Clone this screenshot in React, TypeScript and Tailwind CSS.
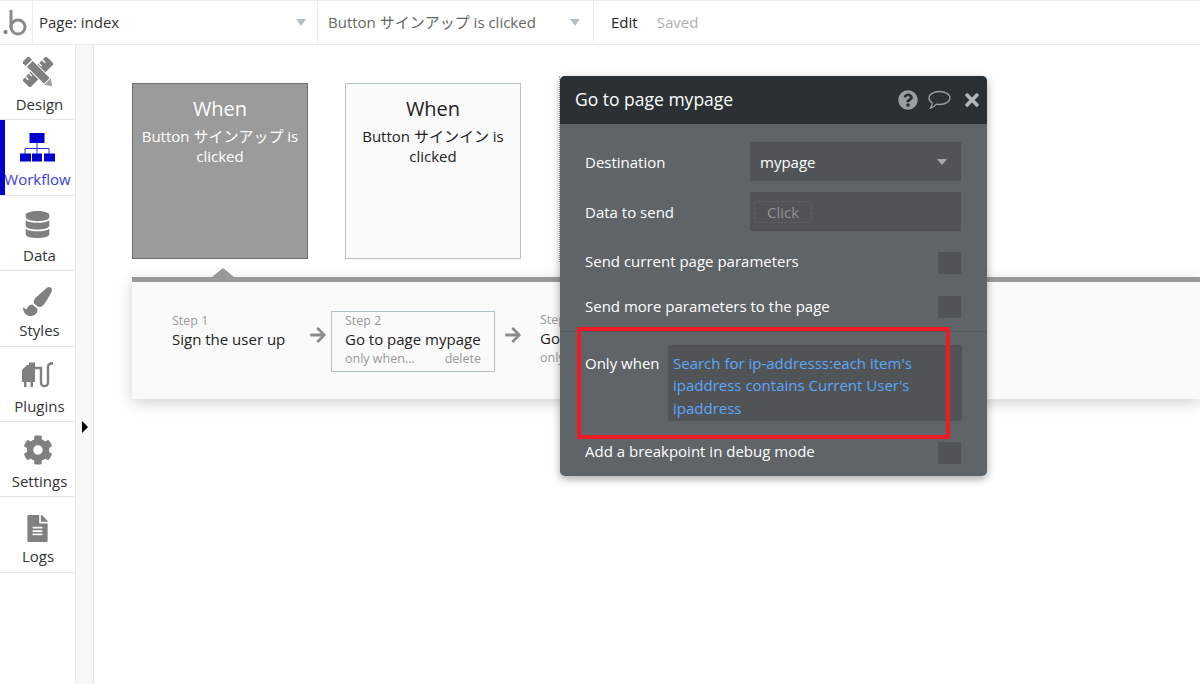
import { FaDatabase, FaPaintBrush, FaCog, FaFileAlt, FaQuestionCircle, FaTimes, FaArrowRight } from "react-icons/fa";
import type { ReactNode } from "react";

const FONT = "font-['Open_Sans','Noto_Sans_CJK_JP',sans-serif]";

function DesignIcon() {
  return (
    <svg width="30" height="30" viewBox="0 0 30 30" fill="#808080" className="mb-[3px]">
      <g transform="rotate(-45 15 15)">
        <rect x="-2" y="9.5" width="34" height="11" />
        <rect x="2" y="9.5" width="1.4" height="4" fill="#fff" />
        <rect x="7" y="9.5" width="1.4" height="4" fill="#fff" />
        <rect x="21" y="9.5" width="1.4" height="4" fill="#fff" />
        <rect x="26" y="9.5" width="1.4" height="4" fill="#fff" />
      </g>
      <g transform="rotate(45 15 15)">
        <rect x="-3" y="10.5" width="5" height="9" />
        <rect x="3" y="10.5" width="25" height="9" stroke="#fff" strokeWidth="1" />
        <path d="M28.5 10.5 L35 15 L28.5 19.5 Z" fill="#a0a0a0" />
      </g>
    </svg>
  );
}

function WorkflowIcon() {
  return (
    <svg width="36" height="29" viewBox="0 0 36 29" className="mb-[3px]" fill="#0000cc">
      <rect x="9.5" y="0" width="15" height="10" />
      <path d="M17 10 V15 M5 21 V15.5 H29 V21 M17 15 V21" fill="none" stroke="#3030d8" strokeWidth="1" />
      <rect x="0" y="20.5" width="11" height="8" />
      <rect x="12" y="20.5" width="10" height="8" />
      <rect x="24" y="20.5" width="11" height="8" />
    </svg>
  );
}

function PluginsIcon() {
  return (
    <svg width="32" height="26" viewBox="0 0 32 26" fill="none" className="mb-[4px]">
      <path d="M0 8 L5 3 H7 V0.5 H13 V20 H11 V25 H8.5 V20 H4.5 V25 H2 V20 H0 Z" fill="#808080" />
      <path d="M13 6 H19 V20 C19 25.5 26 25.5 26 20 V5 C26 2.5 28 1.2 31 1.2" stroke="#808080" strokeWidth="2.4" />
    </svg>
  );
}

function CommentIcon() {
  return (
    <svg width="23" height="20" viewBox="0 0 23 20" fill="none" stroke="#9a9ea1" strokeWidth="1.3">
      <path d="M11.5 1.5 C17.3 1.5 22 4.4 22 8 C22 11.6 17.3 14.5 11.5 14.5 C10.3 14.5 9.4 14.4 8.4 14.2 C7 16.2 4.8 17.6 2.4 18.2 C3.6 16.6 4.2 15 4.2 13 C2.2 11.8 1 10 1 8 C1 4.4 5.7 1.5 11.5 1.5 Z" />
    </svg>
  );
}

function NavItem({ icon, label, active, labelClass = "" }: { icon: ReactNode; label: string; active?: boolean; labelClass?: string }) {
  return (
    <div className="relative flex h-[75.4px] flex-col items-center border-b border-[#e4e4e4] pl-[4px]">
      {active && <span className="absolute bottom-0 left-0 top-0 w-[5px] bg-[#0000cc]" />}
      <div className="flex h-[45px] items-end justify-center pr-[4px]">{icon}</div>
      <span className={`mt-[4px] text-[15px] leading-[20px] ${active ? "ml-[-4px] text-[#3a3ae0]" : "text-[#333]"} ${labelClass}`}>{label}</span>
    </div>
  );
}

function Row({ label, children, className = "", labelClass = "" }: { label: string; children?: ReactNode; className?: string; labelClass?: string }) {
  return (
    <div className={`flex items-center justify-between pl-[25px] pr-[26px] ${className}`}>
      <span className={`text-[15px] leading-[20px] text-white ${labelClass}`}>{label}</span>
      {children}
    </div>
  );
}

function Check() {
  return <div className="h-[22px] w-[23px] bg-[#505457]" />;
}

function Popup() {
  return (
    <div className="absolute left-[560px] top-[76px] h-[400px] w-[427px] overflow-hidden rounded-[5px] bg-[#5f6468] shadow-[0_3px_8px_rgba(0,0,0,0.35)]">
      <div className="flex h-[48px] items-center justify-between bg-[#2a3033] pl-[15px] pr-[5px]">
        <span className="pb-[2px] text-[17.5px] text-white">Go to page mypage</span>
        <div className="flex items-center gap-[11px] text-[#9a9ea1]">
          <FaQuestionCircle size={20} className="mr-[-1px]" />
          <CommentIcon />
          <FaTimes size={20} className="text-[#b4b7b9]" />
        </div>
      </div>

      <Row label="Destination" className="mt-[18px] h-[39px]">
        <div className="flex h-[39px] w-[211px] items-center justify-between bg-[#505457] pl-[10px] pr-[14px] text-[15px] text-white">
          <span className="pt-[2px]">mypage</span>
          <span className="h-0 w-0 border-x-[5px] border-t-[6px] border-x-transparent border-t-[#a8abad]" />
        </div>
      </Row>
      <Row label="Data to send" className="mt-[11px] h-[39px]">
        <div className="flex h-[39px] w-[211px] items-center bg-[#505457] pl-[4px]">
          <span className="rounded-[3px] border border-dashed border-[#5d6164] px-[12px] text-[15px] leading-[20px] text-[#8f9295]">Click</span>
        </div>
      </Row>
      <Row label="Send current page parameters" labelClass="mb-[4px]" className="mt-[21px] h-[22px]">
        <Check />
      </Row>
      <Row label="Send more parameters to the page" labelClass="mb-[2px]" className="mt-[22px] h-[22px]">
        <Check />
      </Row>
      <div className="mt-[13px] border-t border-[#54585b]" />
      <div className="mt-[13px] flex items-start pl-[25px] pr-[25px]">
        <span className="w-[83px] pt-[8px] text-[15px] leading-[20px] text-white">Only when</span>
        <div className="h-[76px] flex-1 rounded-[2px] bg-[#505457] px-[5px] pt-[7px] text-[15px] leading-[22.3px] text-[#5ea6f7]">
          Search for ip-addresss:each item's ipaddress contains Current User's ipaddress
        </div>
      </div>
      <Row label="Add a breakpoint in debug mode" labelClass="mb-[4px]" className="mt-[21px] h-[22px]">
        <Check />
      </Row>
    </div>
  );
}

function Step({ n, title, className = "" }: { n: number; title: string; className?: string }) {
  return (
    <div className={`shrink-0 ${className}`}>
      <div className="text-[12.5px] leading-[15px] text-[#999]">Step {n}</div>
      <div className="text-[15px] leading-[22px] text-[#222]">{title}</div>
    </div>
  );
}

export default function App() {
  return (
    <div className={`${FONT} relative flex h-[684px] w-[1200px] flex-col overflow-hidden bg-white`}>
      {/* top bar */}
      <div className="flex h-[45px] shrink-0 items-stretch border-y border-[#e8ebeb] bg-white text-[15px]">
        <div className="flex w-[33px] items-center border-r border-[#e8eded]">
          <svg width="30" height="34" viewBox="0 0 30 34" fill="none" className="mt-[-1px]">
            <circle cx="5.5" cy="27" r="2.2" fill="#8a8a8a" />
            <path d="M11 5 V23" stroke="#8a8a8a" strokeWidth="3" />
            <circle cx="18" cy="22" r="7" stroke="#8a8a8a" strokeWidth="3" />
          </svg>
        </div>
        <div className="flex w-[285px] items-center justify-between border-r border-[#e8eded] pl-[6px] pr-[11px] text-[#333]">
          Page: index
          <span className="h-0 w-0 border-x-[5.5px] border-t-[7px] border-x-transparent border-t-[#b4c0c6]" />
        </div>
        <div className="flex w-[276px] items-center justify-between border-r border-[#e8eded] pl-[10px] pr-[13px] text-[#666]">
          Button サインアップ is clicked
          <span className="h-0 w-0 border-x-[5.5px] border-t-[7px] border-x-transparent border-t-[#b4c0c6]" />
        </div>
        <div className="flex items-center gap-[19px] pl-[17px]">
          <span className="text-[#222]">Edit</span>
          <span className="text-[#b0b0b0]">Saved</span>
        </div>
      </div>

      <div className="flex flex-1">
        {/* sidebar */}
        <div className="w-[76px] shrink-0 border-r border-[#e8e8e8]">
          <NavItem icon={<DesignIcon />} label="Design" />
          <NavItem icon={<WorkflowIcon />} label="Workflow" active />
          <NavItem icon={<FaDatabase size={27} className="mb-[3px] text-[#808080]" />} label="Data" />
          <NavItem icon={<FaPaintBrush size={29} className="text-[#808080]" />} label="Styles" />
          <NavItem icon={<PluginsIcon />} label="Plugins" />
          <NavItem icon={<FaCog size={30} className="mb-[2px] text-[#808080]" />} label="Settings" />
          <NavItem icon={<FaFileAlt size={27} className="text-[#808080]" />} label="Logs" labelClass="mr-[3px]" />
        </div>
        {/* gutter */}
        <div className="relative w-[18px] shrink-0 border-r border-[#e2e2e2] bg-[#f8f8f8]">
          <span className="absolute left-[6px] top-[376px] h-0 w-0 border-y-[6px] border-l-[6px] border-y-transparent border-l-black" />
        </div>
        {/* canvas */}
        <div className="flex-1 overflow-hidden pl-[38px] pt-[38px]">
          <div className="flex gap-[37px]">
            <div className="h-[176px] w-[176px] border border-[#6f6f6f] bg-[#9b9b9b] px-[6px] pt-[11px] text-center text-white">
              <div className="text-[20px] leading-[28px]">When</div>
              <div className="mt-[3px] text-[15px] leading-[20px]">Button サインアップ is clicked</div>
            </div>
            <div className="h-[176px] w-[176px] border border-[#b5c2c2] bg-[#fafafa] px-[6px] pt-[11px] text-center text-[#222]">
              <div className="text-[20px] leading-[28px]">When</div>
              <div className="mt-[3px] text-[15px] leading-[20px]">Button サインイン is clicked</div>
            </div>
          </div>
          <div className="relative mt-[18px] flex h-[122px] items-start border-t-[5px] border-[#999] bg-[#fafafa] pl-[40px] pt-[30px] shadow-[0_4px_14px_rgba(0,0,0,0.18)]">
            <span className="absolute left-[80px] top-[-14px] h-0 w-0 border-x-[11px] border-b-[9px] border-x-transparent border-b-[#999]" />
            <Step n={1} title="Sign the user up" className="w-[136px] pt-[1px]" />
            <FaArrowRight size={18} className="ml-[1px] mt-[14px] shrink-0 text-[#8a8a8a]" />
            <div className="ml-[4px] mt-[-1px] h-[61px] w-[164px] shrink-0 border border-[#b5c2c8] px-[13px] pt-[1px]">
              <Step n={2} title="Go to page mypage" />
              <div className="mt-[1px] flex justify-between text-[12.5px] leading-[15px] text-[#999]">
                <span>only when...</span>
                <span>delete</span>
              </div>
            </div>
            <FaArrowRight size={18} className="ml-[9px] mt-[14px] shrink-0 text-[#8a8a8a]" />
            <div className="ml-[18px] shrink-0">
              <Step n={3} title="Go to page mypage" />
              <div className="mt-[1px] text-[12.5px] leading-[15px] text-[#999]">only when...</div>
            </div>
          </div>
        </div>
      </div>

      {/* dotted edge left of the popup */}
      <div className="absolute left-[559px] top-[76px] h-[186px] border-l border-dotted border-[#aaa]" />
      <Popup />
      <div className="absolute left-[577px] top-[327px] h-[112px] w-[373px] border-[4px] border-[#ed1c24]" />
    </div>
  );
}
